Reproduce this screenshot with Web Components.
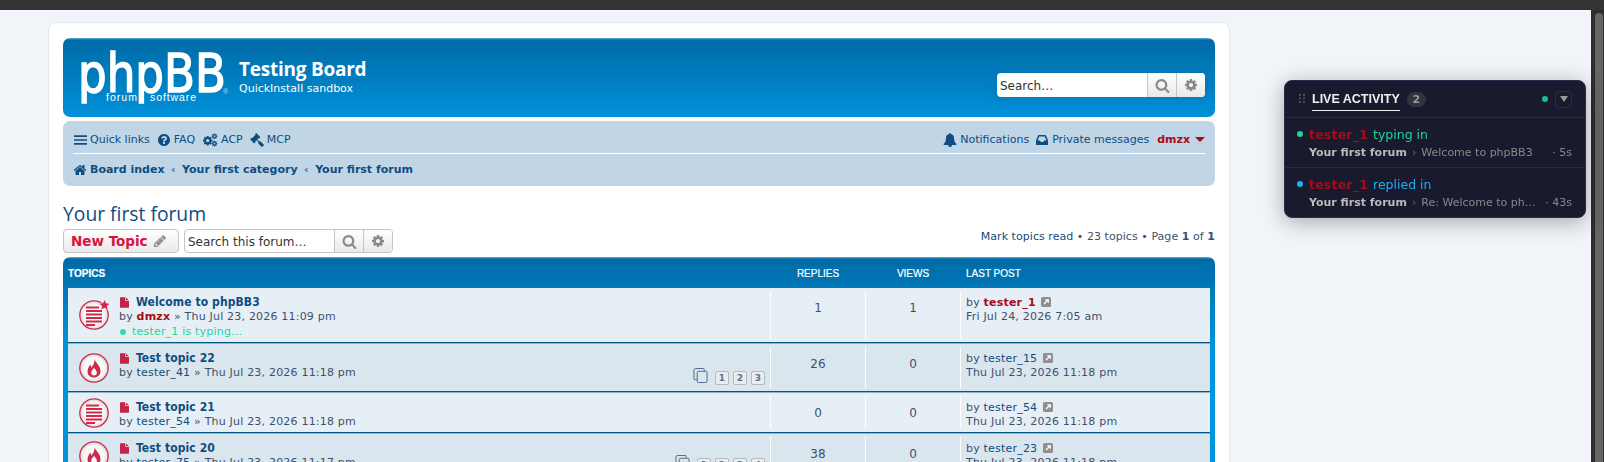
<!DOCTYPE html>
<html lang="en"><head><meta charset="utf-8"><title>Your first forum</title>
<style>
html,body{margin:0;height:100%;overflow:hidden}
body{display:grid;grid-template-columns:1fr 13px;grid-template-rows:10px 1fr;background:#f1f5f9;font:11px/14px "DejaVu Sans",sans-serif;color:#3f4f6b}
b.u{color:#a80b16}
[slot]{min-width:0}
</style></head><body>
<top-bar></top-bar>
<forum-page>
  <forum-card>
    <forum-header></forum-header>
    <forum-nav>
      <nav-item slot="left" icon="bars">Quick links</nav-item>
      <nav-item slot="left" icon="faq">FAQ</nav-item>
      <nav-item slot="left" icon="cogs">ACP</nav-item>
      <nav-item slot="left" icon="gavel">MCP</nav-item>
      <nav-item slot="right" icon="bell">Notifications</nav-item>
      <nav-item slot="right" icon="inbox">Private messages</nav-item>
      <user-menu slot="right">dmzx</user-menu>
      <bread-crumbs slot="crumbs"></bread-crumbs>
    </forum-nav>
    <forum-title>Your first forum</forum-title>
    <action-bar></action-bar>
    <topic-table>
      <topic-row h="55" kind="read" star tone="a">
        <span slot="title">Welcome to phpBB3</span>
        <span slot="meta">by <b class="u">dmzx</b> » Thu Jul 23, 2026 11:09 pm</span>
        <typing-note slot="note">tester_1 is typing…</typing-note>
        <span slot="replies">1</span><span slot="views">1</span>
        <last-post slot="last" date="Fri Jul 24, 2026 7:05 am"><b class="u">tester_1</b></last-post>
      </topic-row>
      <topic-row h="48" kind="hot" tone="b">
        <span slot="title">Test topic 22</span>
        <span slot="meta">by <user-link>tester_41</user-link> » Thu Jul 23, 2026 11:18 pm</span>
        <page-list slot="pages" pages="1 2 3"></page-list>
        <span slot="replies">26</span><span slot="views">0</span>
        <last-post slot="last" date="Thu Jul 23, 2026 11:18 pm"><user-link>tester_15</user-link></last-post>
      </topic-row>
      <topic-row h="40" kind="read" tone="a">
        <span slot="title">Test topic 21</span>
        <span slot="meta">by <user-link>tester_54</user-link> » Thu Jul 23, 2026 11:18 pm</span>
        <span slot="replies">0</span><span slot="views">0</span>
        <last-post slot="last" date="Thu Jul 23, 2026 11:18 pm"><user-link>tester_54</user-link></last-post>
      </topic-row>
      <topic-row h="45" kind="hot" tone="b">
        <span slot="title">Test topic 20</span>
        <span slot="meta">by <user-link>tester_75</user-link> » Thu Jul 23, 2026 11:17 pm</span>
        <page-list slot="pages" pages="1 2 3 4"></page-list>
        <span slot="replies">38</span><span slot="views">0</span>
        <last-post slot="last" date="Thu Jul 23, 2026 11:18 pm"><user-link>tester_23</user-link></last-post>
      </topic-row>
    </topic-table>
  </forum-card>
</forum-page>
<win-scrollbar></win-scrollbar>
<live-panel>
  <live-item color="#1ed49b"><span slot="verb">typing in</span><span slot="topic">Welcome to phpBB3</span><span slot="time">5s</span></live-item>
  <live-item color="#1ab0f5" last><span slot="verb">replied in</span><span slot="topic">Re: Welcome to phpBB3</span><span slot="time">43s</span></live-item>
</live-panel>
<script>
const P={
bars:['0 0 15 16','<path d="M0 2.500h15v2H0zM0 7h15v2H0zM0 11.500h15v2H0z"/>'],
faq:['0 0 1792 1792','<path d="M1024 1376v-192q0-14-9-23t-23-9h-192q-14 0-23 9t-9 23v192q0 14 9 23t23 9h192q14 0 23-9t9-23zm256-672q0-88-55.5-163t-138.5-116-170-41q-243 0-371 213-15 24 8 42l132 100q7 6 19 6 16 0 25-12 53-68 86-92 34-24 86-24 48 0 85.5 26t37.5 59q0 38-20 61t-68 45q-63 28-115.5 86.5t-52.5 125.5v36q0 14 9 23t23 9h192q14 0 23-9t9-23q0-19 21.5-49.5t54.5-49.5q32-18 49-28.5t46-35 44.5-48 28-60.5 12.5-81zm384 192q0 209-103 385.5t-279.5 279.5-385.5 103-385.5-103-279.5-279.5-103-385.5 103-385.5 279.5-279.5 385.5-103 385.5 103 279.5 279.5 103 385.5z"/>'],
gear:['0 0 1792 1792','<path d="M1152 896q0-106-75-181t-181-75-181 75-75 181 75 181 181 75 181-75 75-181zm512-109v222q0 12-8 23t-20 13l-185 28q-19 54-39 91 35 50 107 138 10 12 10 25t-9 23q-27 37-99 108t-94 71q-12 0-26-9l-138-108q-44 23-91 38-16 136-29 186-7 28-36 28h-222q-14 0-24.5-8.5t-11.5-21.5l-28-184q-49-16-90-37l-141 107q-10 9-25 9-14 0-25-11-126-114-165-168-7-10-7-23 0-12 8-23 15-21 51-66.5t54-70.5q-27-50-41-99l-183-27q-13-2-21-12.5t-8-23.5v-222q0-12 8-23t19-13l186-28q14-46 39-92-40-57-107-138-10-12-10-24 0-10 9-23 26-36 98.5-107.5t94.5-71.5q13 0 26 10l138 107q44-23 91-38 16-136 29-186 7-28 36-28h222q14 0 24.5 8.5t11.5 21.5l28 184q49 16 90 37l142-107q9-9 24-9 13 0 25 10 129 119 165 170 7 8 7 22 0 12-8 23-15 21-51 66.5t-54 70.5q26 50 41 98l183 28q13 2 21 12.5t8 23.5z"/>'],
search:['0 0 1792 1792','<path d="M1216 832q0-185-131.5-316.5t-316.5-131.5-316.5 131.5-131.5 316.5 131.5 316.5 316.5 131.5 316.5-131.5 131.5-316.5zm512 832q0 52-38 90t-90 38q-54 0-90-38l-343-342q-179 124-399 124-143 0-273.5-55.5t-225-150-150-225-55.5-273.5 55.5-273.5 150-225 225-150 273.5-55.5 273.5 55.5 225 150 150 225 55.5 273.5q0 220-124 399l343 343q37 37 37 90z"/>'],
home:['0 0 1792 1792','<path d="M1472 992v480q0 26-19 45t-45 19h-384v-384h-256v384h-384q-26 0-45-19t-19-45v-480q0-1 .5-3t.5-3l575-474 575 474q1 2 1 6zm223-69l-62 74q-8 9-21 11h-3q-13 0-21-7l-692-577-692 577q-12 8-24 7-13-2-21-11l-62-74q-8-10-7-23.5t11-21.5l719-599q32-26 76-26t76 26l244 204v-195q0-14 9-23t23-9h192q14 0 23 9t9 23v408l219 182q10 8 11 21.5t-7 23.5z"/>'],
bell:['0 0 1792 1792','<path d="M912 1696q0-16-16-16-59 0-101.5-42.5t-42.5-101.5q0-16-16-16t-16 16q0 73 51.5 124.5t124.5 51.5q16 0 16-16zm816-288q0 52-38 90t-90 38h-448q0 106-75 181t-181 75-181-75-75-181h-448q-52 0-90-38t-38-90q50-42 91-88t85-119.5 74.5-158.5 50-206 19.5-260q0-152 117-282.5t307-158.5q-8-19-8-39 0-40 28-68t68-28 68 28 28 68q0 20-8 39 190 28 307 158.5t117 282.5q0 139 19.5 260t50 206 74.5 158.5 85 119.5 91 88z"/>'],
inbox:['0 0 1792 1792','<path d="M1151 960h316q-1-3-2.5-8.5t-2.5-7.5l-212-496h-708l-212 496q-1 3-2.5 8.5t-2.5 7.5h316l95 192h320zm513 30v482q0 26-19 45t-45 19h-1408q-26 0-45-19t-19-45v-482q0-62 25-123l238-552q10-25 36.5-42t52.5-17h832q26 0 52.5 17t36.5 42l238 552q25 61 25 123z"/>'],
gavel:['0 0 1792 1792','<path d="M1771 1536q0 53-37 90l-107 108q-39 37-91 37-53 0-90-37l-363-364q-38-36-38-90 0-53 43-96l-256-256-126 126q-14 14-34 14t-34-14q2 2 12.5 12t12.5 13 10 11.5 10 13.5 6 13.5 5.5 16.5.5 18q0 38-28 68-3 3-16.5 18t-19 20.5-18.5 16.5-22 15.5-22 9-26 4.5q-40 0-68-28l-408-408q-28-28-28-68 0-13 4.5-26t9-22 15.5-22 16.5-18.5 20.5-19 18-16.5q30-28 68-28 10 0 18 1.5t16.5 5.5 13.5 6 13.5 10 11.5 10 13 12.5 12 12.5q-14-14-14-34t14-34l348-348q14-14 34-14t34 14q-2-2-12.5-12t-12.5-13-10-11.5-10-13.5-6-13.5-5.5-16.5-.5-18q0-38 28-68 3-3 16.5-18t19-20.5 18.5-16.5 22-15.5 22-9 26-4.5q40 0 68 28l408 408q28 28 28 68 0 13-4.5 26t-9 22-15.5 22-16.5 18.5-20.5 19-18 16.5q-30 28-68 28-10 0-18-1.5t-16.5-5.5-13.5-6-13.5-10-11.5-10-13-12.5-12-12.5q14 14 14 34t-14 34l-126 126 256 256q43-43 96-43 52 0 91 37l363 363q37 39 37 91z"/>'],
pencil:['0 0 1792 1792','<path d="M491 1536l91-91-235-235-91 91v107h128v128h107zm523-928q0-22-22-22-10 0-17 7l-542 542q-7 7-7 17 0 22 22 22 10 0 17-7l542-542q7-7 7-17zm-54-192l416 416-832 832h-416v-416zm683 96q0 53-37 90l-166 166-416-416 166-165q36-38 90-38 53 0 91 38l235 234q37 39 37 91z"/>'],
file:['0 0 1536 1792','<path d="M1024 512v-472q22 14 36 28l408 408q14 14 28 36h-472zm-128 32q0 40 28 68t68 28h544v1056q0 40-28 68t-68 28h-1344q-40 0-68-28t-28-68v-1600q0-40 28-68t68-28h800v544z"/>']
};
P.cogs=['0 0 22.500 20',`<g transform="translate(0 3) scale(.0089)">${P.gear[1]}</g><g transform="translate(13 0) scale(.0052)">${P.gear[1]}</g><g transform="translate(13 10.500) scale(.0052)">${P.gear[1]}</g>`];
function svg(n,s,extra=''){const[v,b]=P[n];const r=v.split(' ');const w=Math.round(s*r[2]/r[3]);return `<svg part="i" width="${w}" height="${s}" viewBox="${v}" fill="currentColor" ${extra}>${b}</svg>`}
function def(name,html,init){customElements.define(name,class extends HTMLElement{
  constructor(){super();this.attachShadow({mode:'open'})}
  connectedCallback(){this.shadowRoot.innerHTML=typeof html==='function'?html(this):html;init&&init(this)}
})}
def('top-bar','<style>:host{display:block;grid-column:1/3;background:#333}</style>');
def('win-scrollbar','<style>:host{display:block;background:#2d2d2d;padding:3px 1px 0 4px}div{height:100%;background:#666;border-radius:4px 4px 0 0}</style><div></div>');
def('forum-page','<style>:host{display:block;padding:12px 0 0 48px;overflow:hidden;min-width:0}</style><slot></slot>');
def('forum-card','<style>:host{display:block;box-sizing:border-box;width:1182px;height:900px;background:#fff;border:1px solid #e2e8f0;border-radius:8px;padding:15px 14px}</style><slot></slot>');
def('search-box',h=>`<style>
:host{display:flex;box-sizing:border-box;height:24px;width:${h.getAttribute('w')}px;border-radius:4px;background:#fff;overflow:hidden;font:${h.getAttribute('fs')}px/22px "DejaVu Sans",sans-serif;color:#333;${h.hasAttribute('shadow')?'box-shadow:0 0 10px #0075b0':'border:1px solid #c7c3bf'}}
.f{flex:1;padding:1px 0 0 3px;line-height:${h.hasAttribute('shadow')?24:22}px;white-space:nowrap}
.b{width:28px;display:flex;align-items:center;justify-content:center;background:linear-gradient(#fff,#e9e9e9);border-left:1px solid #c7c3bf;color:#8a8a8a}
</style><div class="f"><slot></slot></div><div class="b">${svg('search',15)}</div><div class="b">${svg('gear',14)}</div>`);
def('forum-header',`<style>
:host{display:flex;height:79px;box-sizing:border-box;border-radius:7px;background:linear-gradient(#54b6ea 0,#006ba6 2px,#0091da 79px);color:#fff;padding-left:14px}
svg.logo{margin-top:13px;flex:none;overflow:visible}
.t{margin:19px 0 0 9px;flex:1}
h1{margin:0;font:700 19px/25px "Open Sans",sans-serif;letter-spacing:-.25px}
p{margin:0;font:11px/13px "DejaVu Sans",sans-serif}
search-box{margin:35px 10px 0 0}
</style>
<svg class="logo" width="153" height="56" viewBox="0 0 153 56" fill="#fff">
<text x="1" y="41" font-family="DejaVu Sans" font-size="54" textLength="148" lengthAdjust="spacingAndGlyphs" stroke="#fff" stroke-width="1.500">phpBB</text>
<text x="29" y="50" font-family="Liberation Sans" font-size="10.5" textLength="31">forum</text>
<text x="73" y="50" font-family="Liberation Sans" font-size="10.5" textLength="46">software</text>
<text x="146" y="43" font-family="Liberation Sans" font-size="7" fill="#b5dcf3">®</text>
</svg>
<div class="t"><h1>Testing Board</h1><p>QuickInstall sandbox</p></div>
<search-box w="208" fs="12" shadow>Search…</search-box>`);
def('forum-nav',`<style>
:host{display:block;margin-top:4px;height:65px;box-sizing:border-box;background:#c0d5e5;border-radius:7px;padding:0 10px}
.r1{display:flex;justify-content:space-between;height:33px;box-sizing:border-box;padding:5px 0 0 1px;border-bottom:1px solid #fff;align-items:center}
.g{display:flex;align-items:center;gap:7px}
.g.rt{gap:6px}
.r2{display:flex;height:31px;align-items:center}
</style><div class="r1"><div class="g"><slot name="left"></slot></div><div class="g rt"><slot name="right"></slot></div></div><div class="r2"><slot name="crumbs"></slot></div>`);
def('nav-item',h=>`<style>:host{display:inline-flex;align-items:center;gap:3px;color:#0f4d80;white-space:nowrap}svg{display:block}</style>${svg(h.getAttribute('icon'),14)}<slot></slot>`);
def('user-menu',`<style>:host{display:inline-flex;align-items:center;gap:5px;margin-left:2px;color:#a80b16;font-weight:700}i{border:5px solid transparent;border-top:5px solid #a80b16;border-bottom:0;width:0;height:0}</style><slot></slot><i></i>`);
def('bread-crumbs',`<style>:host{display:flex;align-items:center;color:#0f4d80;font-weight:700;white-space:nowrap}svg{margin-right:3px}i{font-style:normal;color:#4a6680;margin:0 6.500px}</style>${svg('home',14)}<span>Board index</span><i>‹</i><span>Your first category</span><i>‹</i><span>Your first forum</span>`);
def('forum-title',`<style>:host{display:block;margin-top:16px;font:400 19.300px/24px "Open Sans",sans-serif;color:#0f4d80}</style><slot></slot>`);
def('action-bar',`<style>
:host{display:flex;align-items:center;margin-top:3px;height:24px;gap:5px}
.n{box-sizing:border-box;width:116px;height:24px;display:flex;align-items:center;gap:5px;padding-left:7px;border:1px solid #c7c3bf;border-radius:4px;background:linear-gradient(#fff,#e9e9e9);color:#d9133f;font:700 13.500px/22px "DejaVu Sans",sans-serif;white-space:nowrap}
.n svg{color:#8f8f8f}
.p{margin-left:auto;color:#3f4f6b;padding-bottom:8px;white-space:nowrap;letter-spacing:.05px}
.p a{color:#0f4d80}
</style><div class="n">New Topic ${svg('pencil',14)}</div><search-box w="209" fs="12">Search this forum…</search-box><div class="p"><a>Mark topics read</a> • 23 topics • Page <b>1</b> of <b>1</b></div>`);
def('topic-table',`<style>
:host{display:block;margin-top:4px;padding:0 5px;border-radius:7px 7px 0 0;background:linear-gradient(#54b6ea 0,#006ba6 2px,#0094dd 92px)}
.h{display:grid;grid-template-columns:702px 95px 95px 1fr;height:31px;align-items:center;color:#fff;font:10px/12px "Liberation Sans",sans-serif;-webkit-text-stroke:.2px #fff;padding-top:3px;box-sizing:border-box}
.h b{font-weight:700}
.c{text-align:center;padding-left:1px}
.l{padding-left:6px}
</style><div class="h"><b>TOPICS</b><span class="c">REPLIES</span><span class="c">VIEWS</span><span class="l">LAST POST</span></div><slot></slot>`);
const ICON={read:`<path d="M7 7.500h13M7 11h16M7 14.500h16M7 18h16M7 21.500h16M7 25h9" stroke="#cf2a4a" stroke-width="1.800" fill="none"/>`,
hot:`<path fill="#cf2a4a" fill-rule="evenodd" d="M15.500 6c.6 3.600 6 6.200 6 12.200 0 3.800-2.900 6.300-6.700 6.300-3.700 0-6.300-2.500-6.300-6 0-3 1.500-4.700 2.500-7 .8 1.100 1.200 2.100 1.300 3.200 1.900-2.300 3.600-5.400 3.200-8.700zM15 14.500c-.3 1.700-2.800 2.700-2.800 5.200 0 1.700 1.200 2.800 2.800 2.800s2.900-1.100 2.900-2.800c0-2.400-2.400-3.400-2.900-5.200z"/>`};
def('topic-row',h=>{const id='g'+Math.random().toString(36).slice(2,7);return `<style>
:host{display:grid;grid-template-columns:702px 95px 95px 1fr;box-sizing:border-box;height:${h.getAttribute('h')}px;background:${h.getAttribute('tone')=='a'?'#e6eff6':'#dae6ee'};border-bottom:1px solid #00578a;box-shadow:0 1px 0 #8fb4cc;margin-bottom:1px}
.m{display:flex;padding-left:11px;min-width:0}
.ic{flex:none;align-self:center;margin-right:10px;overflow:visible}
.tx{padding-top:7px;line-height:14.500px;white-space:nowrap;letter-spacing:.2px}
.ti{display:flex;align-items:center;gap:7px;height:15px;padding-left:1px;color:#0f4d80;font:700 12px/15px "DejaVu Sans",sans-serif;font-stretch:condensed;letter-spacing:.1px}
.ti svg{color:#c2244a;flex:none}
.pg{align-self:flex-end;margin:0 5px 6px auto}
.n{border-left:1px solid #fff;margin:3px 0;padding-top:10px;text-align:center;font-size:12px;line-height:14px}
.ls{border-left:1px solid #fff;margin:3px 0;padding:5px 0 0 5px;line-height:13.500px;white-space:nowrap;letter-spacing:.2px}
</style><div class="m"><svg class="ic" width="30" height="30" viewBox="0 0 30 30">
<defs><radialGradient id="${id}"><stop offset="0" stop-color="#fff"/><stop offset=".7" stop-color="#f7f7f7"/><stop offset="1" stop-color="#dcdcdc"/></radialGradient></defs>
<circle cx="15" cy="15" r="14.200" fill="url(#${id})" stroke="#cf2a4a" stroke-width="1.300"/>${ICON[h.getAttribute('kind')]}
${h.hasAttribute('star')?'<path d="M25.500 0l1.500 3.300 3.500.4-2.600 2.400.8 3.500-3.200-1.800-3.200 1.800.8-3.500-2.600-2.400 3.500-.4z" fill="#cf2a4a" stroke="#fff" stroke-width=".8" paint-order="stroke"/>':''}</svg>
<div class="tx"><div class="ti">${svg('file',11)}<slot name="title"></slot></div><div><slot name="meta"></slot></div><div><slot name="note"></slot></div></div><div class="pg"><slot name="pages"></slot></div></div>
<div class="n"><slot name="replies"></slot></div><div class="n"><slot name="views"></slot></div><div class="ls"><slot name="last"></slot></div>`});
def('user-link','<style>:host{color:#0f4d80}</style><slot></slot>');
def('typing-note','<style>:host{display:inline-flex;align-items:center;color:#1ed49b}i{width:6px;height:6px;border-radius:50%;background:#1ed49b;margin:0 6px 0 1px;opacity:.85}</style><i></i><slot></slot>');
def('last-post',h=>`<style>:host{display:block}svg{vertical-align:-1px;margin-left:2px}</style>by <slot></slot> <svg width="10" height="10" viewBox="0 0 10 10"><rect width="10" height="10" rx="1.500" fill="#8f8f8f"/><path d="M3 7l3.500-3.500M4.300 2.800h3v3" stroke="#fff" stroke-width="1.200" fill="none"/></svg><br>${h.getAttribute('date')}`);
def('page-list',h=>`<style>:host{display:flex;align-items:flex-start;gap:4px;height:14px}
i{box-sizing:border-box;width:14px;height:14px;border:1px solid #b4bac0;border-radius:2px;background:#ececec;color:#5c758c;font:700 9px/12px "DejaVu Sans",sans-serif;text-align:center;letter-spacing:0}
svg{margin:-3px 3px 0 0;color:#4a6283}</style><svg width="15" height="15" viewBox="0 0 15 16" fill="none" stroke="currentColor" stroke-width="1"><path d="M3.500 12.500h-2a1 1 0 0 1-1-1v-9a2 2 0 0 1 2-2h8a1 1 0 0 1 1 1v1.500"/><rect x="4" y="3.500" width="10.500" height="12" rx="1.500"/></svg>${h.getAttribute('pages').split(' ').map(p=>`<i>${p}</i>`).join('')}`);
def('live-panel',`<style>
:host{position:fixed;left:1284px;top:80px;width:302px;height:137.500px;box-sizing:border-box;background:#1a1a2e;border:1px solid #2a2a4e;border-radius:8px;box-shadow:0 4px 22px rgba(0,0,0,.32);color:#ddd;font:11px/14px "DejaVu Sans",sans-serif;overflow:hidden}
.h{display:flex;align-items:center;height:37px;box-sizing:border-box;padding:0 13px 0 14px;border-bottom:1px solid #2a2a4e}
.d{width:6px;height:10px;background:radial-gradient(circle at 1px 1px,#555 .8px,transparent 1px) 0 0/4px 3.500px;margin-right:7px}
.t{font:700 12.500px/14px "Liberation Sans",sans-serif;color:#eee;border-bottom:1px solid #eee;padding-bottom:4px;margin-top:4px}
.b{margin-left:7px;width:19px;height:15px;border-radius:8px;background:#33333f;color:#999;font:700 11px/15px "DejaVu Sans",sans-serif;text-align:center;margin-top:1px}
.g{margin-left:auto;width:6px;height:6px;border-radius:50%;background:#10c48a}
.c{margin-left:7px;width:17px;height:17px;box-sizing:border-box;border:1px solid #2a2a4e;border-radius:4px;display:flex;align-items:center;justify-content:center}
.c i{border:4px solid transparent;border-top:6px solid #999;border-bottom:0;width:0;height:0}
</style><div class="h"><div class="d"></div><div class="t">LIVE ACTIVITY</div><div class="b">2</div><div class="g"></div><div class="c"><i></i></div></div><slot></slot>`);
def('live-item',h=>`<style>
:host{display:block;height:49px;box-sizing:border-box;padding:9px 13px 0 12px;${h.hasAttribute('last')?'':'border-bottom:1px solid #2a2a3e;height:50px;'}}
.a{display:flex;align-items:center;font-size:12.500px;line-height:16px;color:${h.getAttribute('color')}}
.a i{width:6px;height:6px;border-radius:50%;background:${h.getAttribute('color')};margin-right:6px;margin-top:-2px}
.a b{color:#a80b16;margin-right:5px;letter-spacing:.2px}
.l{display:flex;align-items:center;margin:3px 0 0 12px;white-space:nowrap;line-height:14px;color:#888}
.l b{color:#bbb}
.l u{text-decoration:none;margin:0 5px;color:#666}
.tp{display:block;max-width:116px;overflow:hidden;text-overflow:ellipsis}
.tm{margin-left:auto}
</style><div class="a"><i></i><b>tester_1</b><slot name="verb"></slot></div><div class="l"><b>Your first forum</b><u>›</u><span class="tp"><slot name="topic"></slot></span><span class="tm">· <slot name="time"></slot></span></div>`);
</script>
</body></html>
